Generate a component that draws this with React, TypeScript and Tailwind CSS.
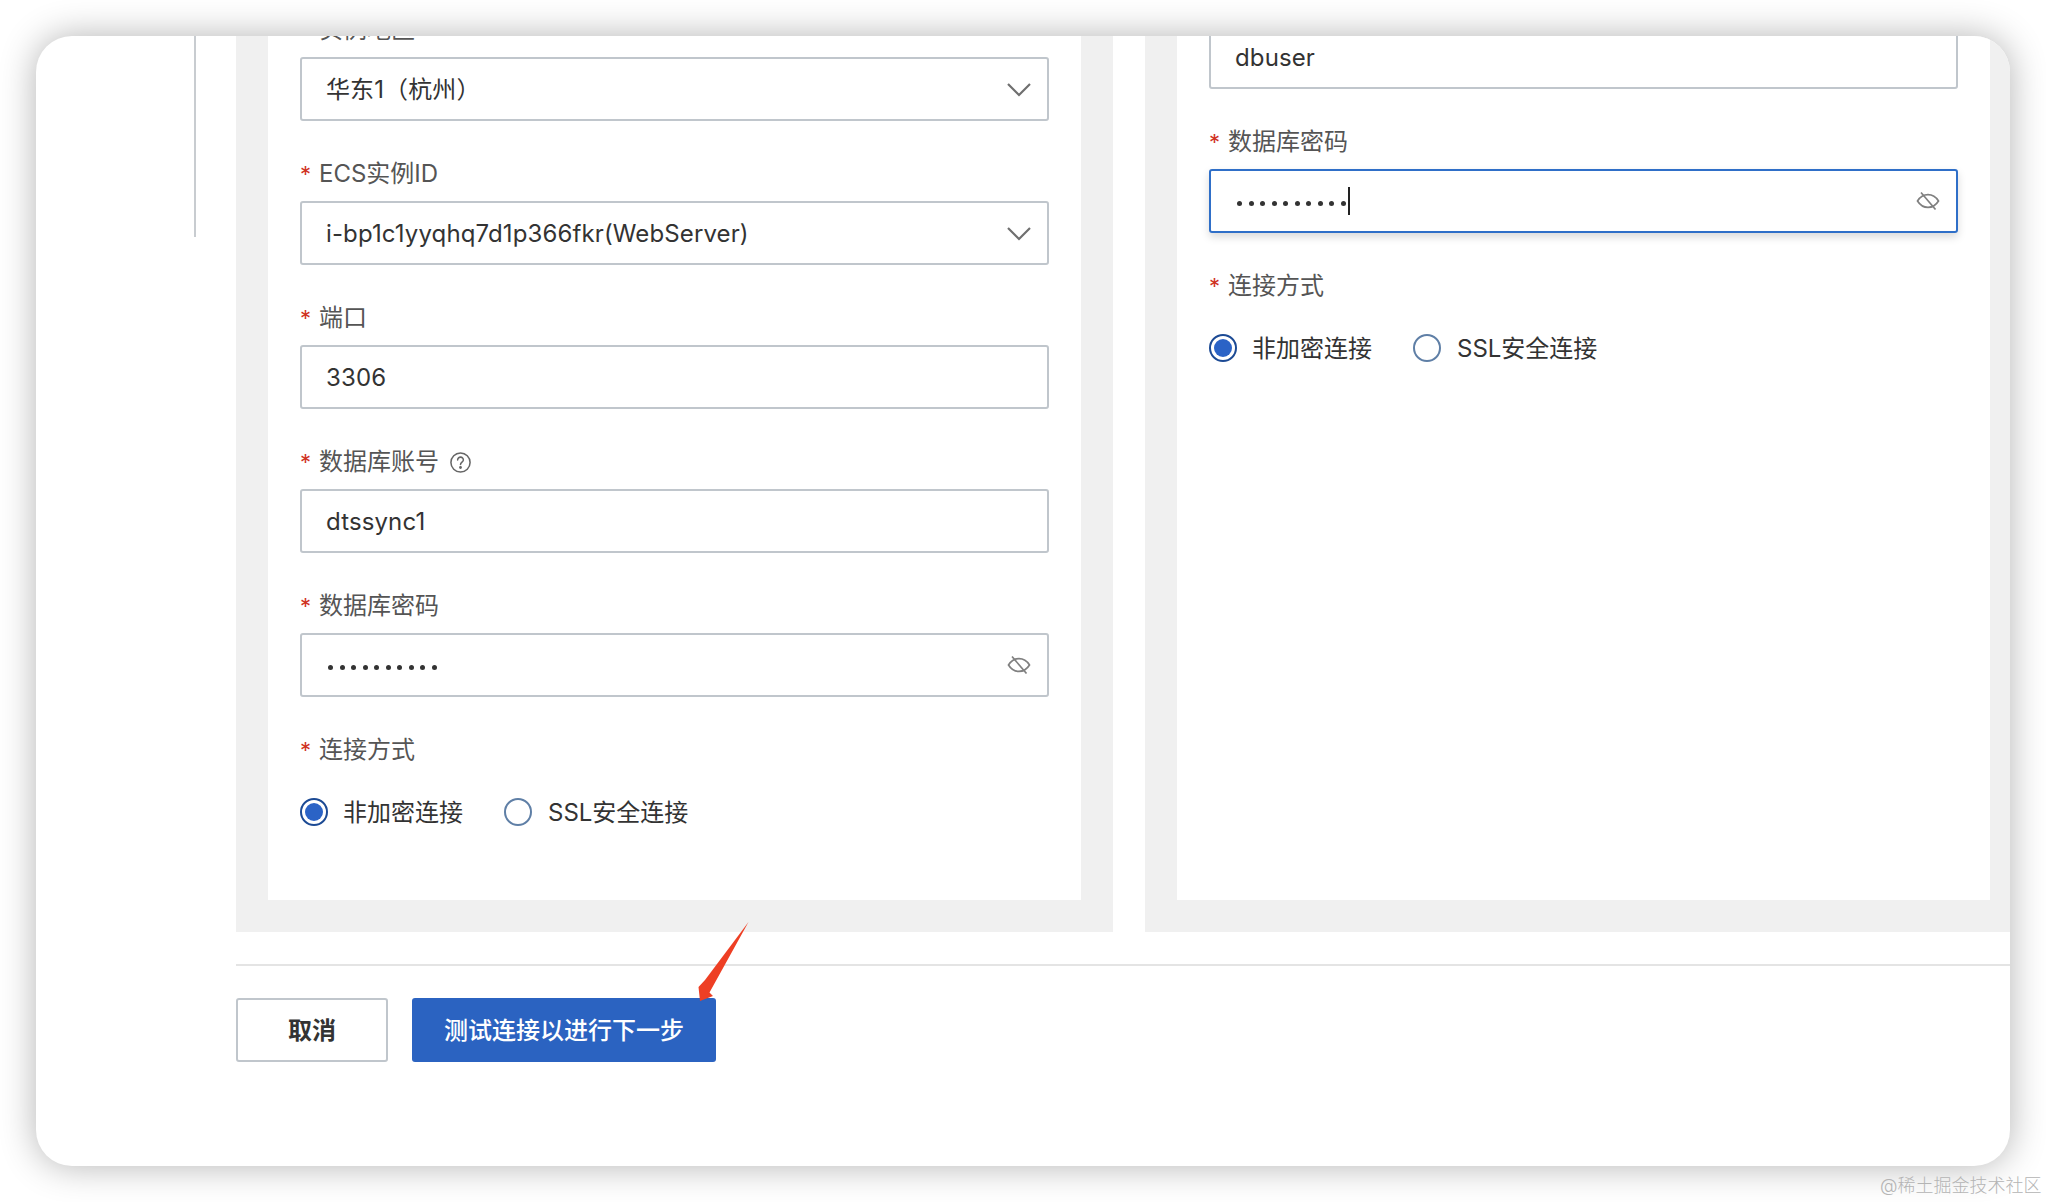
const FONT = "font-['Inter','Noto_Sans_CJK_SC',sans-serif]";

const Label = ({ text, help }: { text: string; help?: boolean }) => (
  <div className="flex items-center h-[36px] mb-[9px] text-[24px] leading-[36px] text-[#555555]">
    <span className="w-[19px] text-[22px] text-[#d0321e]">*</span>
    <span>{text}</span>
    {help && (
      <svg viewBox="0 0 24 24" className="w-[23px] h-[23px] ml-[10px] text-[#666666]" fill="none" stroke="currentColor" strokeWidth="1.6">
        <circle cx="12" cy="12" r="10" />
        <path d="M9 9.300a3 3 0 0 1 6 .2c0 2-3 2.300-3 4.500" strokeLinecap="round" />
        <circle cx="12" cy="17.200" r="0.700" fill="currentColor" />
      </svg>
    )}
  </div>
);

const Chevron = () => (
  <svg viewBox="0 0 26 16" className="w-[26px] h-[16px] -mt-[1px] text-[#6f6f6f]" fill="none" stroke="currentColor" strokeWidth="2.200">
    <path d="M2 3l11 11L24 3" />
  </svg>
);

const EyeOff = () => (
  <svg viewBox="0 0 24 24" className="w-[24px] h-[24px] -translate-x-[1px] text-[#808080]" fill="none" stroke="currentColor" strokeWidth="1.700">
    <path d="M1.500 12c2.600-4.200 6.200-6.400 10.500-6.400S19.900 7.800 22.500 12c-2.600 4.200-6.200 6.400-10.500 6.400S4.100 16.200 1.500 12z" />
    <path d="M5 3.500l14.500 17" />
  </svg>
);

const Field = ({
  label,
  value,
  help,
  select,
  password,
  focused,
}: {
  label?: string;
  value?: string;
  help?: boolean;
  select?: boolean;
  password?: boolean;
  focused?: boolean;
}) => (
  <div className="mb-[35px]">
    {label && <Label text={label} help={help} />}
    <div
      className={`flex items-center justify-between h-[64px] rounded-[3px] border-2 pl-[24px] pr-[15px] text-[24px] tracking-[0.12px] text-[#333333] ${
        focused ? "border-[#2f6fc8] shadow-[0_4px_8px_rgba(0,0,0,0.15)]" : "border-[#c0c6cc]"
      }`}
    >
      {password ? (
        <span className="flex items-center ml-[2px]">
          <span className="flex gap-[6.500px] mt-[4px]">
            {Array.from({ length: 10 }).map((_, i) => (
              <span key={i} className="w-[5px] h-[5px] rounded-full bg-[#333333]" />
            ))}
          </span>
          {focused && <span className="w-[2px] h-[28px] ml-[2px] bg-[#222222]" />}
        </span>
      ) : (
        <span className="pt-[2px]">{value}</span>
      )}
      {select && <Chevron />}
      {password && <EyeOff />}
    </div>
  </div>
);

const Radios = () => (
  <div>
    <Label text="连接方式" />
    <div className="flex items-center mt-[25px] text-[24px] leading-[36px] text-[#333333]">
      <span className="flex items-center justify-center w-[28px] h-[28px] rounded-full border-2 border-[#1c4a94]">
        <span className="w-[18px] h-[18px] rounded-full bg-[#2b63c6]" />
      </span>
      <span className="ml-[15px] pt-[2px]">非加密连接</span>
      <span className="w-[28px] h-[28px] ml-[41px] rounded-full border-2 border-[#5f7fa6]" />
      <span className="ml-[16px] pt-[2px]">SSL安全连接</span>
    </div>
  </div>
);

export default function App() {
  return (
    <div className={`relative w-[2046px] h-[1202px] p-[36px] overflow-hidden bg-white ${FONT}`}>
      <div className="flex h-full rounded-[36px] overflow-hidden bg-white shadow-[0_0_36px_rgba(0,0,0,0.3)]">
        <div className="w-[200px] shrink-0">
          <div className="ml-[158px] w-[2px] h-[201px] bg-[#c8ccd0]" />
        </div>
        <div className="flex-1 min-w-0">
          <div className="flex gap-[32px] h-[896px]">
            <div className="w-[877px] -mt-[24px] pb-[32px] px-[32px] bg-[#f0f0f0]">
              <div className="h-full px-[32px] bg-white">
                <Field label="实例地区" value="华东1（杭州）" select />
                <Field label="ECS实例ID" value="i-bp1c1yyqhq7d1p366fkr(WebServer)" select />
                <Field label="端口" value="3306" />
                <Field label="数据库账号" value="dtssync1" help />
                <Field label="数据库密码" password />
                <Radios />
              </div>
            </div>
            <div className="flex-1 -mt-[11px] pb-[32px] pl-[32px] pr-[20px] bg-[#f0f0f0]">
              <div className="h-full px-[32px] bg-white">
                <Field value="dbuser" />
                <Field label="数据库密码" password focused />
                <Radios />
              </div>
            </div>
          </div>
          <div className="h-[2px] mt-[32px] bg-[#e4e4e4]" />
          <div className="flex gap-[24px] mt-[32px]">
            <button className="w-[152px] h-[64px] pt-[2px] rounded-[3px] border-2 border-[#c0c6cc] text-[24px] font-semibold text-[#333333]">
              取消
            </button>
            <button className="w-[304px] h-[64px] pt-[2px] rounded-[3px] bg-[#2b63c1] text-[24px] font-medium text-white">
              测试连接以进行下一步
            </button>
          </div>
        </div>
      </div>
      <svg viewBox="0 0 80 95" className="absolute left-[680px] top-[915px] w-[80px] h-[95px]">
        <path d="M68.500 7L25 65 18.500 72 20 86 33 81 29.500 77.500z" fill="#ee3f24" />
      </svg>
      <div className="absolute left-[1880px] top-[1174px] text-[18px] leading-[24px] font-light text-[#b4b4b4]">
        @稀土掘金技术社区
      </div>
    </div>
  );
}
